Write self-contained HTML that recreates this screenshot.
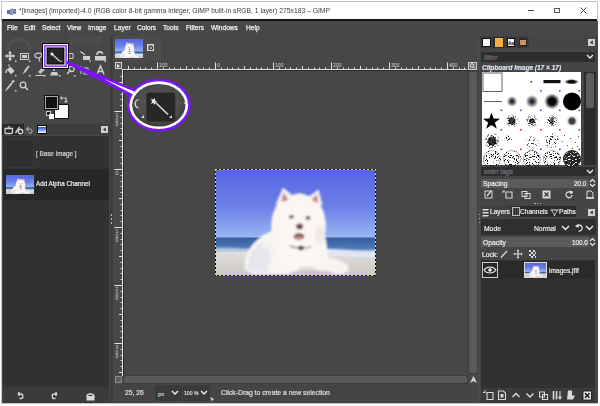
<!DOCTYPE html>
<html><head><meta charset="utf-8">
<style>
*{margin:0;padding:0;box-sizing:border-box}
html,body{width:600px;height:406px;overflow:hidden;background:#fff;font-family:"Liberation Sans",sans-serif}
.a{position:absolute}
.t{position:absolute;white-space:nowrap;line-height:1;transform-origin:0 0}
#menu .t{color:#f2f2f2;font-size:8px;top:24px;transform:scaleX(.83);-webkit-text-stroke:.25px #f2f2f2}
.ic{position:absolute;overflow:visible}
#right .t,#left .t,#imgwin .t{-webkit-text-stroke:.2px currentColor}
</style></head><body>
<svg width="0" height="0" style="position:absolute">
<defs>
<linearGradient id="sky" x1="0" y1="0" x2="0" y2="68.5" gradientUnits="userSpaceOnUse"><stop offset="0" stop-color="#5664e0"/><stop offset=".55" stop-color="#6c80e8"/><stop offset="1" stop-color="#9ab6f2"/></linearGradient>
<linearGradient id="sea" x1="0" y1="68.5" x2="0" y2="88" gradientUnits="userSpaceOnUse"><stop offset="0" stop-color="#3a5c98"/><stop offset=".4" stop-color="#4670b0"/><stop offset="1" stop-color="#6a94c8"/></linearGradient>
<linearGradient id="sand" x1="0" y1="84" x2="0" y2="107" gradientUnits="userSpaceOnUse"><stop offset="0" stop-color="#dedcdc"/><stop offset="1" stop-color="#cdc8c2"/></linearGradient>
<filter id="bl" x="-20%" y="-20%" width="140%" height="140%"><feGaussianBlur stdDeviation="1.2"/></filter>
<filter id="bl2" x="-20%" y="-20%" width="140%" height="140%"><feGaussianBlur stdDeviation=".9"/></filter>
<symbol id="dog" viewBox="0 0 160 107" preserveAspectRatio="none">
<rect width="160" height="107" fill="url(#sky)"/>
<rect y="68.5" width="160" height="20" fill="url(#sea)"/>
<g filter="url(#bl)">
<path d="M100 80C120 79 140 83 160 81V90H100Z" fill="#dfe6f2"/>
<path d="M0 79C15 78 30 80 45 80V85H0Z" fill="#b8cae0"/>
</g>
<path d="M0 83C30 82 60 84 100 86C130 88 150 88 160 89V107H0Z" fill="url(#sand)"/>
<g filter="url(#bl2)">
<!-- body shadow side -->
<path d="M30 101C27 88 36 70 56 62L108 62C112 72 111 82 113 88C124 90 134 96 133 102L126 105L38 105Z" fill="#f7f4f1"/>
<path d="M32 100C31 90 37 79 47 73C50 82 52 93 54 103L38 103Z" fill="#e6e6ee"/>

<!-- paws -->
<ellipse cx="64" cy="98" rx="12" ry="6.5" fill="#f8f5f2"/>
<ellipse cx="119" cy="98" rx="13.5" ry="6" fill="#f6f3f0"/>
<!-- chest -->
<ellipse cx="84" cy="84" rx="22" ry="17" fill="#faf7f4"/>
<!-- head -->
<path d="M56 60C55 45 61 33 70 28L84 24L97 28C105 33 111 45 110 60C109 72 98 80 84 80C70 80 57 72 56 60Z" fill="#faf6f2"/>
<path d="M60 36L67.6 18.5L79 28Z" fill="#f5f1ed"/>
<path d="M107 37L103 20.5L92 28.5Z" fill="#f5f1ed"/>
<path d="M66 33L68 23.5L73 31Z" fill="#c8808a"/>
<path d="M102 34L101.5 25L96 31Z" fill="#c8808a"/>
<ellipse cx="75.9" cy="47.7" rx="2.4" ry="1.8" fill="#5a4038"/>
<ellipse cx="92.4" cy="48.9" rx="2.4" ry="1.8" fill="#5a4038"/>
<ellipse cx="84.1" cy="57.5" rx="3.5" ry="2.9" fill="#6a4444"/>
<ellipse cx="83.5" cy="67.5" rx="5.2" ry="3.2" fill="#5a3030"/>
<ellipse cx="83.5" cy="68.3" rx="3.5" ry="1.8" fill="#d88a8a"/>
<path d="M74 76C80 78.5 90 79 96 77L95 78.5C90 80 80 80 75 78Z" fill="#6a6068" opacity=".8"/>
<ellipse cx="85.5" cy="79" rx="2.8" ry="2.2" fill="#3a3640"/>
<ellipse cx="92" cy="101" rx="10" ry="3.5" fill="#dcd8d4" opacity=".8"/>
<ellipse cx="104" cy="66" rx="5" ry="9" fill="#ebe6e2" opacity=".7"/>
<ellipse cx="52" cy="88" rx="4" ry="10" fill="#e4e4ec" opacity=".7"/>
<ellipse cx="96" cy="104" rx="22" ry="2.5" fill="#bdb8b4" opacity=".7"/>
</g>
</symbol>
</defs></svg>
<!-- window frame -->
<div class="a" style="left:1px;top:1px;width:597px;height:403px;background:#c4c4c4"></div>
<div class="a" style="left:2px;top:2px;width:595px;height:17px;background:#fff"></div>
<div class="a" style="left:2px;top:19px;width:595px;height:2px;background:#161616"></div>
<div class="a" style="left:2px;top:21px;width:596px;height:382px;background:#474747"></div>

<!-- TITLE -->
<svg class="ic" style="left:7px;top:8px" width="9" height="7" viewBox="0 0 9 7">
<rect x="0" y="2" width="3" height="4" fill="#5a6fd0"/><rect x="3" y="1" width="2" height="6" fill="#8a8fb0"/><rect x="5" y="0" width="1" height="7" fill="#9aa"/><rect x="6" y="1" width="3" height="5" fill="#6a80c8"/>
</svg>
<div class="t" style="left:19px;top:7px;font-size:8px;color:#3c3c3c;transform:scaleX(.845)">*[images] (imported)-4.0 (RGB color 8-bit gamma integer, GIMP built-in sRGB, 1 layer) 275x183 – GIMP</div>
<div class="a" style="left:528px;top:10px;width:6px;height:1px;background:#555"></div>
<div class="a" style="left:554px;top:8px;width:6px;height:5px;border:1px solid #555"></div>
<svg class="ic" style="left:580px;top:7px" width="7" height="7" viewBox="0 0 7 7"><path d="M0.5 0.5L6.5 6.5M6.5 0.5L0.5 6.5" stroke="#444" stroke-width="1"/></svg>

<!-- MENU -->
<div id="menu">
<div class="t" style="left:6.5px">File</div>
<div class="t" style="left:24px">Edit</div>
<div class="t" style="left:42px">Select</div>
<div class="t" style="left:67px">View</div>
<div class="t" style="left:88px">Image</div>
<div class="t" style="left:113.5px">Layer</div>
<div class="t" style="left:137px">Colors</div>
<div class="t" style="left:163px">Tools</div>
<div class="t" style="left:186px">Filters</div>
<div class="t" style="left:210.5px">Windows</div>
<div class="t" style="left:246px">Help</div>
</div>

<!-- LEFT DOCK -->
<div id="left">
<!-- wilber faint -->
<svg class="ic" style="left:2px;top:35px" width="108" height="15" viewBox="0 0 108 15">
<path d="M6 15 A10 10 0 0 1 28 15" stroke="#505050" stroke-width="3" fill="none"/>
<path d="M34 15 A8 8 0 0 1 50 15" stroke="#4d4d4d" stroke-width="2" fill="none"/>
<path d="M52 15 A8 8 0 0 1 66 12" stroke="#4d4d4d" stroke-width="2" fill="none"/>
<rect x="68" y="1" width="32" height="8" fill="#4d4d4d"/>
</svg>
<!-- toolbox icons -->
<svg class="ic" style="left:0;top:45px" width="110" height="50" viewBox="0 0 110 50" fill="#cfcfcf" stroke="#cfcfcf">
<!-- move -->
<path d="M10 6.5V15.5M5.5 11H14.5" stroke-width="1.6" fill="none"/>
<path d="M10 6L8 8.5H12ZM10 16L8 13.5H12ZM5 11L7.5 9V13ZM15 11L12.5 9V13Z" stroke="none"/>
<!-- rect select -->
<rect x="20.5" y="8.5" width="8" height="6" fill="none" stroke-width="1"/><rect x="22" y="10" width="5" height="3" stroke="none"/>
<!-- lasso -->
<path d="M39 13C34 13 33.5 9 37 8.3C41 7.6 44 9.5 40.5 12C39 13 38.5 14.5 40 16.5" fill="none" stroke-width="1.2"/>
<!-- crop -->
<path d="M69 8.5H73V13.5H69Z" fill="none" stroke-width="1"/>
<!-- transform -->
<path d="M80.5 6.5L85 10" stroke-width="1.3" fill="none"/><rect x="83" y="11" width="7" height="4" stroke="none"/>
<!-- unlock -->
<path d="M97 10C97 6 102 6 102.5 9" fill="none" stroke-width="1.6"/><rect x="95" y="11" width="11" height="4.5" stroke="none"/>
<!-- row 2 -->
<path d="M7 24.5L10.5 21.5L14.5 26L11 29.5Z" stroke="none"/><path d="M7 24.5L5.5 28" stroke-width="1.4" fill="none"/><path d="M9 21.5V19.5" stroke-width="1.2"/>
<path d="M29 21L25 26" stroke-width="2" fill="none"/><path d="M25.5 24.5L22 29.5L26.5 26.5Z" stroke="none"/>
<path d="M38 27L42.5 22L45 24.5L40.5 29Z" stroke="none" opacity=".9"/><rect x="35.5" y="30" width="9" height="1" stroke="none"/>
<path d="M54 21.5V26" stroke-width="1.4"/><path d="M50 30.5H58.5L57 27H51.5Z" stroke="none"/><circle cx="54" cy="21.5" r="1.3" stroke="none"/>
<path d="M67 29L71 25" stroke-width="1.4" fill="none"/><circle cx="71.5" cy="24" r="2.6" fill="none" stroke-width="1.3"/>
<path d="M81 21V29M84 23H88V29H84Z" stroke-width="1.1" fill="none"/>
<path d="M97 29.5L100.5 21L104 29.5M98.3 26.5H102.7" stroke-width="1.5" fill="none"/>
<!-- row 3 -->
<path d="M7 44L12 38" stroke-width="1.8" fill="none"/><path d="M12 37.5L14 35.5" stroke-width="2.2"/><path d="M7 44L5.5 46" stroke-width="1"/>
<circle cx="23" cy="40" r="2.8" fill="none" stroke-width="1.3"/><path d="M25 42L28 45" stroke-width="1.6"/>
<!-- corner marks -->
<g stroke="none"><rect x="15" y="15.5" width="1.5" height="1.5"/><rect x="29" y="15.5" width="1.5" height="1.5"/><rect x="44" y="15.5" width="1.5" height="1.5"/><rect x="89.5" y="15.5" width="1.5" height="1.5"/><rect x="104.5" y="15.5" width="1.5" height="1.5"/>
<rect x="15" y="30" width="1.5" height="1.5"/><rect x="29" y="30" width="1.5" height="1.5"/><rect x="44" y="30" width="1.5" height="1.5"/><rect x="59" y="30" width="1.5" height="1.5"/><rect x="74" y="30" width="1.5" height="1.5"/>
<rect x="15" y="45" width="1.5" height="1.5"/></g>
</svg>
<!-- fg/bg -->
<div class="a" style="left:54px;top:104px;width:15px;height:15px;background:#fff;border:1px solid #111"></div>
<div class="a" style="left:44px;top:95px;width:15px;height:15px;background:#111;border:1px solid #111;box-shadow:inset 0 0 0 1px #aaa,inset 0 0 0 2px #111"></div>
<svg class="ic" style="left:60px;top:96px" width="8" height="7" viewBox="0 0 8 7"><path d="M1 2H6V6" stroke="#ccc" stroke-width="1.2" fill="none"/><path d="M0 2L2 0V4ZM6 7L4 5H8Z" fill="#ccc"/></svg>
<div class="a" style="left:46px;top:111px;width:5px;height:5px;background:#111;border:1px solid #ccc"></div>
<div class="a" style="left:49px;top:114px;width:5px;height:5px;background:#fff"></div>

<!-- dock tabs -->
<div class="a" style="left:2px;top:123.5px;width:108px;height:11px;background:#3e3e3e"></div>
<div class="a" style="left:2px;top:123.5px;width:22px;height:11px;background:#2a2a2a"></div>
<div class="a" style="left:24px;top:123.5px;width:12px;height:11px;background:#474747"></div>
<svg class="ic" style="left:3px;top:124.5px" width="45" height="10" viewBox="0 0 45 10" stroke="#cfcfcf" fill="none">
<path d="M2 3.5H9.5V7.5C9.5 8.5 9 8.5 8 8.5H3.5C2.5 8.5 2 8.5 2 7.5Z" stroke-width="1.3"/><path d="M4.5 3.5L5.5 1.5H6.5L7 3.5" stroke-width="1"/>
<path d="M12.5 8L16.5 2" stroke-width="1.4"/><circle cx="17.5" cy="6.5" r="2.2" stroke-width="1.4"/>
<path d="M23.5 4H27.5C29.5 4 29.5 8 27.5 8H25.5M23.5 4L25.5 2M23.5 4L25.5 6" stroke-width="1.1" stroke="#aaa"/>
</svg>
<div class="a" style="left:37px;top:124.5px;width:9.5px;height:9.5px;background:#000"></div>
<div class="a" style="left:38px;top:125.5px;width:7.5px;height:7.5px;background:linear-gradient(#f4f4f4 0,#f4f4f4 1.5px,#3a60e0 1.5px,#9ab0f0 5px,#eee 6px)"></div>
<div class="a" style="left:101px;top:126px;width:7px;height:7px;background:#d0d0d0"></div>
<svg class="ic" style="left:101px;top:126px" width="7" height="7" viewBox="0 0 7 7"><path d="M4.8 1.5L2 3.5L4.8 5.5Z" fill="#333"/></svg>

<!-- undo list -->
<div class="a" style="left:3px;top:136px;width:106px;height:252px;background:#313131"></div>
<div class="a" style="left:6px;top:139px;width:28px;height:29px;background:#2e2e2e;border:1px solid #383838"></div>
<div class="t" style="left:36px;top:150px;font-size:7px;color:#d8d8d8;transform:scaleX(.9)">[ Base Image ]</div>
<div class="a" style="left:3px;top:169px;width:106px;height:31px;background:#272727"></div>
<svg id="thumb1" class="a" style="left:6px;top:175px" width="28" height="19"><use href="#dog" width="28" height="19"/></svg>
<div class="t" style="left:36px;top:180px;font-size:7px;color:#f0f0f0;transform:scaleX(.9)">Add Alpha Channel</div>

<!-- bottom buttons -->
<div class="a" style="left:3px;top:387px;width:106px;height:1px;background:#3a3a3a"></div>
<div class="a" style="left:3px;top:388px;width:106px;height:15px;background:#3b3b3b"></div>
<svg class="ic" style="left:0;top:389px" width="110" height="14" viewBox="0 0 110 14" stroke="#d8d8d8" fill="none">
<path d="M18 5H21C23.5 5 23.5 9.5 21 9.5H19.5M18 5L19.5 3.2M18 5L19.5 6.8" stroke-width="1.3"/>
<path d="M57 5H54C51.5 5 51.5 9.5 54 9.5H55.5M57 5L55.5 3.2M57 5L55.5 6.8" stroke-width="1.3"/>
<path d="M87 7.5C87 4 94 4 94 7.5" stroke-width="1.5"/><rect x="86.5" y="7" width="8" height="4.5" fill="#d8d8d8" stroke="none"/>
</svg>
</div>

<!-- separators -->
<div class="a" style="left:110px;top:36px;width:3px;height:367px;background:#3c3c3c"></div>
<div class="a" style="left:477px;top:36px;width:3px;height:367px;background:#4a4a4a"></div>

<!-- IMAGE WINDOW -->
<div id="imgwin">
<!-- image tabs -->
<div class="a" style="left:113px;top:36px;width:48px;height:25px;background:#4c4c4c"></div>
<svg id="thumb2" class="a" style="left:115px;top:38.5px" width="28" height="19.5"><use href="#dog" width="28" height="19.5"/></svg>
<div class="a" style="left:146.5px;top:43.5px;width:7.5px;height:7.5px;background:#9a9a9a;border:1px solid #d8d8d8"></div>
<svg class="ic" style="left:146.5px;top:43.5px" width="8" height="8" viewBox="0 0 8 8"><circle cx="4" cy="4" r="2.3" fill="#333"/><path d="M2.7 2.7L5.3 5.3M5.3 2.7L2.7 5.3" stroke="#ccc" stroke-width=".8"/></svg>
<!-- ruler corner -->
<div class="a" style="left:114.5px;top:62px;width:7.5px;height:7px;background:#5a5a5a;border:1px solid #cfcfcf"></div>
<svg class="ic" style="left:116px;top:63.5px" width="5" height="4" viewBox="0 0 5 4"><path d="M1 0L4 2L1 4Z" fill="#eee"/></svg>
<!-- rulers -->
<svg class="ic" style="left:113px;top:61px" width="355" height="315" viewBox="0 0 355 315">
<g stroke="#e0e0e0" stroke-width="1" fill="none">
<path d="M9 8.5H354"/>
<path d="M9.5 9V315"/>
</g>
<g id="rt" stroke="#e0e0e0" stroke-width="1"><path d="M15.5 5.0V8.5M21.5 6.5V8.5M27.5 6.5V8.5M32.5 6.5V8.5M38.5 6.5V8.5M44.5 1.5V8.5M50.5 6.5V8.5M56.5 6.5V8.5M61.5 6.5V8.5M67.5 6.5V8.5M73.5 5.0V8.5M79.5 6.5V8.5M85.5 6.5V8.5M90.5 6.5V8.5M96.5 6.5V8.5M102.5 1.5V8.5M108.5 6.5V8.5M114.5 6.5V8.5M119.5 6.5V8.5M125.5 6.5V8.5M131.5 5.0V8.5M137.5 6.5V8.5M143.5 6.5V8.5M148.5 6.5V8.5M154.5 6.5V8.5M160.5 1.5V8.5M166.5 6.5V8.5M172.5 6.5V8.5M177.5 6.5V8.5M183.5 6.5V8.5M189.5 5.0V8.5M195.5 6.5V8.5M201.5 6.5V8.5M206.5 6.5V8.5M212.5 6.5V8.5M218.5 1.5V8.5M224.5 6.5V8.5M230.5 6.5V8.5M235.5 6.5V8.5M241.5 6.5V8.5M247.5 5.0V8.5M253.5 6.5V8.5M259.5 6.5V8.5M264.5 6.5V8.5M270.5 6.5V8.5M276.5 1.5V8.5M282.5 6.5V8.5M288.5 6.5V8.5M293.5 6.5V8.5M299.5 6.5V8.5M305.5 5.0V8.5M311.5 6.5V8.5M317.5 6.5V8.5M322.5 6.5V8.5M328.5 6.5V8.5M334.5 1.5V8.5M340.5 6.5V8.5M346.5 6.5V8.5M351.5 6.5V8.5M7.5 15.5H9.5M6.0 21.5H9.5M7.5 27.5H9.5M7.5 33.5H9.5M7.5 38.5H9.5M7.5 44.5H9.5M1.5 50.5H9.5M7.5 56.5H9.5M7.5 62.5H9.5M7.5 67.5H9.5M7.5 73.5H9.5M6.0 79.5H9.5M7.5 85.5H9.5M7.5 91.5H9.5M7.5 96.5H9.5M7.5 102.5H9.5M1.5 108.5H9.5M7.5 114.5H9.5M7.5 120.5H9.5M7.5 125.5H9.5M7.5 131.5H9.5M6.0 137.5H9.5M7.5 143.5H9.5M7.5 149.5H9.5M7.5 154.5H9.5M7.5 160.5H9.5M1.5 166.5H9.5M7.5 172.5H9.5M7.5 178.5H9.5M7.5 183.5H9.5M7.5 189.5H9.5M6.0 195.5H9.5M7.5 201.5H9.5M7.5 207.5H9.5M7.5 212.5H9.5M7.5 218.5H9.5M1.5 224.5H9.5M7.5 230.5H9.5M7.5 236.5H9.5M7.5 241.5H9.5M7.5 247.5H9.5M6.0 253.5H9.5M7.5 259.5H9.5M7.5 265.5H9.5M7.5 270.5H9.5M7.5 276.5H9.5M1.5 282.5H9.5M7.5 288.5H9.5M7.5 294.5H9.5M7.5 299.5H9.5M7.5 305.5H9.5M6.0 311.5H9.5"/></g><g fill="#d8d8d8" font-size="5" font-family="Liberation Sans"><text x="46.0" y="5.5">100</text><text x="104.0" y="5.5">0</text><text x="162.0" y="5.5">100</text><text x="220.0" y="5.5">200</text><text x="278.0" y="5.5">300</text><text x="336.0" y="5.5">400</text><text x="2.5" y="56.0">1</text><text x="2.5" y="60.5">0</text><text x="2.5" y="65.0">0</text><text x="2.5" y="114.0">0</text><text x="2.5" y="172.0">1</text><text x="2.5" y="176.5">0</text><text x="2.5" y="181.0">0</text><text x="2.5" y="230.0">2</text><text x="2.5" y="234.5">0</text><text x="2.5" y="239.0">0</text><text x="2.5" y="288.0">3</text><text x="2.5" y="292.5">0</text><text x="2.5" y="297.0">0</text></g>
</svg>
<!-- canvas -->
<div class="a" style="left:123px;top:70px;width:345px;height:305px;background:#474747"></div>
<div class="a" style="left:123px;top:70px;width:345px;height:1px;background:#2a2a2a"></div>
<div class="a" style="left:123px;top:70px;width:1px;height:305px;background:#2a2a2a"></div>
<div class="a" style="left:110.7px;top:214px;width:1.5px;height:10px;background:repeating-linear-gradient(180deg,#bbb 0 1.5px,transparent 1.5px 4.2px)"></div>
<!-- zoom button -->
<div class="a" style="left:468px;top:62px;width:9px;height:8px;background:#6a6a6a;border:1px solid #cfcfcf"></div>
<svg class="ic" style="left:469px;top:63px" width="7" height="6" viewBox="0 0 7 6"><circle cx="3" cy="2.6" r="1.8" fill="none" stroke="#eee" stroke-width=".9"/><path d="M4.3 3.9L5.8 5.4" stroke="#eee" stroke-width="1"/></svg>
<!-- v scrollbar -->
<div class="a" style="left:468px;top:70px;width:10px;height:304px;background:#3c3c3c"></div>
<div class="a" style="left:469px;top:72px;width:8px;height:301px;background:#5a5a5a;border-radius:2px"></div>
<svg class="ic" style="left:469px;top:375px" width="9" height="9" viewBox="0 0 9 9"><path d="M4.5 1L8 8L4.5 6L1 8Z" fill="#d8d8d8"/></svg>
<!-- h scrollbar -->
<div class="a" style="left:123px;top:375px;width:345px;height:9px;background:#3c3c3c"></div>
<div class="a" style="left:124px;top:376px;width:343px;height:7px;background:#5a5a5a;border-radius:2px"></div>
<div class="a" style="left:115px;top:376px;width:6.5px;height:7px;background:#5e5e5e;border:1px solid #8a8a8a"></div>
<!-- status bar -->
<div class="a" style="left:113px;top:384px;width:364px;height:19px;background:#454545"></div>
<div class="t" style="left:125px;top:389px;font-size:8px;color:#e0e0e0;transform:scaleX(.85)">25, 26</div>
<div class="a" style="left:155px;top:385px;width:27px;height:16px;background:#3a3a3a;border-radius:2px"></div>
<div class="t" style="left:158px;top:391px;font-size:6px;color:#ccc">px</div>
<svg class="ic" style="left:171px;top:390px" width="8" height="5" viewBox="0 0 8 5"><path d="M1 1L4 4L7 1" stroke="#eee" stroke-width="1.4" fill="none"/></svg>
<div class="a" style="left:183px;top:385px;width:27px;height:16px;background:#3a3a3a;border-radius:2px"></div>
<div class="t" style="left:184px;top:390px;font-size:6px;color:#ddd;transform:scaleX(.85)">100 %</div>
<svg class="ic" style="left:200px;top:390px" width="8" height="5" viewBox="0 0 8 5"><path d="M1 1L4 4L7 1" stroke="#eee" stroke-width="1.4" fill="none"/></svg>
<svg class="ic" style="left:210px;top:397px" width="5" height="5" viewBox="0 0 5 5"><path d="M0 0L4 2L2 4Z" fill="#ddd"/></svg>
<div class="t" style="left:221px;top:389px;font-size:8px;color:#e0e0e0;transform:scaleX(.85)">Click-Drag to create a new selection</div>

<!-- photo -->
<svg id="photo" class="a" style="left:215px;top:169px" width="161" height="107"><use href="#dog" width="161" height="107"/></svg>
<div class="a" style="left:215px;top:169px;width:161px;height:1px;background:repeating-linear-gradient(90deg,#e6e21a 0 2.5px,#141414 2.5px 4px)"></div>
<div class="a" style="left:215px;top:275px;width:161px;height:1px;background:repeating-linear-gradient(90deg,#e6e21a 0 2.5px,#141414 2.5px 4px)"></div>
<div class="a" style="left:215px;top:169px;width:1px;height:107px;background:repeating-linear-gradient(180deg,#e6e21a 0 2.5px,#141414 2.5px 4px)"></div>
<div class="a" style="left:375px;top:169px;width:1px;height:107px;background:repeating-linear-gradient(180deg,#e6e21a 0 2.5px,#141414 2.5px 4px)"></div>
</div>

<!-- RIGHT DOCK -->
<div id="right">
<div class="a" style="left:480px;top:36px;width:118px;height:367px;background:#454545"></div>
<!-- brush tabs -->
<div class="a" style="left:480px;top:36px;width:49px;height:12px;background:#3c3c3c"></div>
<div class="a" style="left:493px;top:37px;width:11px;height:11px;background:#2a2a2a"></div>
<div class="a" style="left:482px;top:38px;width:8.5px;height:9px;background:#fafafa;border:1px solid #111"></div>
<div class="a" style="left:494.5px;top:38px;width:8.5px;height:9px;background:#f5b040"></div>
<div class="a" style="left:506.5px;top:38px;width:8.5px;height:9px;background:#fafafa;border:1px solid #111"></div>
<div class="t" style="left:508px;top:40.5px;font-size:5px;color:#333">Aa</div>
<div class="a" style="left:518.5px;top:38px;width:8px;height:9px;background:#2a2a2a"></div>
<div class="a" style="left:519.5px;top:40px;width:6px;height:5px;background:#c89860"></div>
<div class="a" style="left:588px;top:39px;width:7px;height:7px;background:#d0d0d0"></div>
<svg class="ic" style="left:588px;top:39px" width="7" height="7" viewBox="0 0 7 7"><path d="M4.8 1.5L2 3.5L4.8 5.5Z" fill="#333"/></svg>
<!-- filter -->
<div class="a" style="left:481px;top:51.5px;width:114px;height:10.5px;background:#2e2e2e"></div>
<div class="t" style="left:484px;top:53.5px;font-size:7px;color:#6e6e6e;font-style:italic">filter</div>
<svg class="ic" style="left:586px;top:54px" width="8" height="5" viewBox="0 0 8 5"><path d="M1 1L4 4L7 1" stroke="#eee" stroke-width="1.4" fill="none"/></svg>
<div class="t" style="left:482px;top:63.5px;font-size:7px;color:#dde4f0;font-style:italic;font-weight:bold;transform:scaleX(.93)">Clipboard Image (17 × 17)</div>
<!-- brush grid -->
<div class="a" style="left:481.5px;top:72px;width:99px;height:93px;background:#fff"></div>
<svg class="ic" style="left:481.5px;top:72px" width="99" height="93" viewBox="0 0 99 93">
<defs>
<radialGradient id="sb"><stop offset="0" stop-color="#000"/><stop offset=".45" stop-color="#000" stop-opacity=".95"/><stop offset="1" stop-color="#000" stop-opacity="0"/></radialGradient>
<radialGradient id="sb2"><stop offset="0" stop-color="#000" stop-opacity=".9"/><stop offset=".3" stop-color="#000" stop-opacity=".75"/><stop offset="1" stop-color="#000" stop-opacity="0"/></radialGradient>
<radialGradient id="sg"><stop offset="0" stop-color="#000" stop-opacity="1"/><stop offset=".6" stop-color="#000" stop-opacity=".8"/><stop offset="1" stop-color="#000" stop-opacity="0"/></radialGradient>
<filter id="spk" x="0" y="0" width="100%" height="100%"><feTurbulence type="fractalNoise" baseFrequency=".8" numOctaves="2" seed="7" result="n"/><feColorMatrix in="n" values="0 0 0 0 0  0 0 0 0 0  0 0 0 0 0  9 0 0 0 -4.6" result="m"/><feComposite in="SourceGraphic" in2="m" operator="in"/></filter>
<filter id="spk2" x="0" y="0" width="100%" height="100%"><feTurbulence type="fractalNoise" baseFrequency=".7" numOctaves="2" seed="2" result="n"/><feColorMatrix in="n" values="0 0 0 0 0  0 0 0 0 0  0 0 0 0 0  12 0 0 0 -7" result="m"/><feComposite in="SourceGraphic" in2="m" operator="in"/></filter>
<filter id="spk3" x="0" y="0" width="100%" height="100%"><feTurbulence type="fractalNoise" baseFrequency=".9" numOctaves="2" seed="11" result="n"/><feColorMatrix in="n" values="0 0 0 0 0  0 0 0 0 0  0 0 0 0 0  10 0 0 0 -5.75" result="m"/><feComposite in="SourceGraphic" in2="m" operator="in"/></filter>
<filter id="blr"><feGaussianBlur stdDeviation=".6"/></filter>
</defs>
<rect x="1" y="1" width="19" height="18.5" fill="#fff" stroke="#666" stroke-width="1"/>
<rect x="48.5" y="9" width="1.5" height="1.5" fill="#333"/>
<rect x="61.5" y="8" width="17" height="3.2" fill="#111"/>
<ellipse cx="89.5" cy="9.8" rx="7.5" ry="2.8" fill="url(#sb)"/>
<path d="M2 29.5H20" stroke="#666" stroke-width="1"/>
<circle cx="30" cy="29.4" r="5.5" fill="url(#sb2)"/>
<circle cx="50" cy="29.4" r="6.5" fill="url(#sb2)"/>
<circle cx="70" cy="29.4" r="8" fill="url(#sb)"/>
<circle cx="90" cy="29.4" r="9" fill="#000" filter="url(#blr)"/>
<path d="M9.5 40.5L11.6 46.6L18 46.7L12.9 50.6L14.8 56.7L9.5 53L4.2 56.7L6.1 50.6L1 46.7L7.4 46.6Z" fill="#000"/>
<g filter="url(#blr)" opacity=".8"><circle cx="30" cy="49" r="3.5" fill="#111"/><ellipse cx="50" cy="49" rx="3" ry="2.5" fill="#222"/><ellipse cx="70" cy="49" rx="1.8" ry="4" fill="#333"/><circle cx="90" cy="49" r="3.5" fill="#555"/><circle cx="10" cy="69" r="4.5" fill="#111"/></g>
<g filter="url(#spk)">
<circle cx="30" cy="49" r="7" fill="url(#sg)"/>
<circle cx="50" cy="49" r="7" fill="url(#sg)"/>
<circle cx="70" cy="49" r="6.5" fill="url(#sg)"/>
<circle cx="10" cy="69" r="9" fill="url(#sg)"/>
</g>
<circle cx="90" cy="49" r="6" fill="url(#sb2)" opacity=".6"/>
<g filter="url(#spk2)">
<circle cx="27" cy="66" r="3" fill="#000"/>
<circle cx="50" cy="71" r="8" fill="url(#sg)" opacity=".8"/>
<circle cx="70" cy="69" r="9" fill="url(#sg)"/>
</g>
<g fill="#222"><rect x="82" y="63" width=".9" height=".9"/><rect x="88" y="66" width=".9" height=".9"/><rect x="93" y="70" width=".9" height=".9"/><rect x="85" y="73" width=".9" height=".9"/><rect x="96" y="64" width=".9" height=".9"/><rect x="90" y="76" width=".9" height=".9"/><rect x="80" y="69" width=".9" height=".9"/><rect x="95" y="74" width=".9" height=".9"/></g>
<g filter="url(#spk3)">
<circle cx="10" cy="87" r="9" fill="#000"/><circle cx="30" cy="87" r="9" fill="#000"/><circle cx="50" cy="87" r="9" fill="#000"/><circle cx="70" cy="87" r="9" fill="#000"/>
</g>
<circle cx="90" cy="87" r="9" fill="#222"/>
<g fill="none" stroke="#333" stroke-width=".6" opacity=".6"><circle cx="10" cy="87" r="8.5"/><circle cx="30" cy="87" r="8.5"/><circle cx="50" cy="87" r="8.5"/><circle cx="70" cy="87" r="8.5"/></g>
<g filter="url(#spk2)"><circle cx="90" cy="87" r="8" fill="#fff"/></g>
<g fill="#3f4fd0"><rect x="58" y="18" width="1.6" height="1.6"/><rect x="77" y="18" width="1.6" height="1.6"/><rect x="96.5" y="18" width="1.6" height="1.6"/>
<rect x="18.5" y="37.5" width="1.6" height="1.6"/><rect x="38" y="37.5" width="1.6" height="1.6"/><rect x="58" y="37.5" width="1.6" height="1.6"/><rect x="77" y="37.5" width="1.6" height="1.6"/><rect x="96.5" y="37.5" width="1.6" height="1.6"/>
<rect x="18.5" y="57" width="1.6" height="1.6"/><rect x="58" y="76.5" width="1.6" height="1.6"/><rect x="77" y="76.5" width="1.6" height="1.6"/></g>
<g fill="#c03030"><rect x="38" y="57" width="1.6" height="1.6"/><rect x="58" y="57" width="1.6" height="1.6"/><rect x="77" y="57" width="1.6" height="1.6"/><rect x="96.5" y="57" width="1.6" height="1.6"/>
<rect x="18.5" y="76.5" width="1.6" height="1.6"/><rect x="38" y="76.5" width="1.6" height="1.6"/><rect x="96.5" y="76.5" width="1.6" height="1.6"/></g>
</svg>
<!-- brush scrollbar -->
<div class="a" style="left:584px;top:72px;width:11.5px;height:93px;background:#2c2c2c"></div>
<div class="a" style="left:585.5px;top:73px;width:8.5px;height:34.5px;background:#5c5c5c;border-radius:2px"></div>
<!-- enter tags -->
<div class="a" style="left:481px;top:167px;width:114px;height:9px;background:#2e2e2e"></div>
<div class="t" style="left:484px;top:168.5px;font-size:6.5px;color:#777;font-style:italic">enter tags</div>
<svg class="ic" style="left:586px;top:169px" width="8" height="5" viewBox="0 0 8 5"><path d="M1 1L4 4L7 1" stroke="#eee" stroke-width="1.4" fill="none"/></svg>
<!-- spacing -->
<div class="a" style="left:481px;top:178.5px;width:108px;height:9px;background:#5a5a5a"></div>
<div class="t" style="left:483px;top:179.5px;font-size:7.5px;color:#eee;transform:scaleX(.9)">Spacing</div>
<div class="t" style="left:574px;top:179.5px;font-size:7px;color:#eee;transform:scaleX(.9)">20.0</div>
<svg class="ic" style="left:589px;top:178px" width="7" height="10" viewBox="0 0 7 10"><path d="M1 4L3.5 1.5L6 4M1 6L3.5 8.5L6 6" stroke="#eee" stroke-width="1.1" fill="none"/></svg>
<!-- brush action icons -->
<svg class="ic" style="left:480px;top:189px" width="118" height="11" viewBox="0 0 118 11" stroke="#d8d8d8" fill="none">
<rect x="5" y="2" width="7" height="7" stroke-width="1"/><path d="M7 7L11 2" stroke-width="1.3"/>
<path d="M24 1V3H22M26 3V9H32V3Z" stroke-width="1.1"/>
<rect x="42" y="2.5" width="5" height="5" stroke-width="1"/><rect x="45" y="4.5" width="5" height="5" stroke-width="1"/>
<rect x="63" y="2" width="7" height="7" fill="#d8d8d8"/><path d="M64.5 3.5L68.5 7.5M68.5 3.5L64.5 7.5" stroke="#333" stroke-width="1.2"/>
<path d="M91 3.5A3 3 0 1 0 92 6" stroke-width="1.3"/><path d="M90 2L93 3L91 5Z" fill="#d8d8d8"/>
<path d="M107 2H111L113 4V9H107Z" stroke-width="1"/><path d="M106 9H114" stroke-width="1.5"/>
</svg>
<!-- dots separator -->
<div class="a" style="left:534px;top:202.5px;width:8px;height:1.5px;background:repeating-linear-gradient(90deg,#bbb 0 1.5px,transparent 1.5px 3px)"></div>
<div class="a" style="left:478.5px;top:214px;width:1.5px;height:10px;background:repeating-linear-gradient(180deg,#aaa 0 1.5px,transparent 1.5px 4px)"></div>
<!-- layers tabs -->
<div class="a" style="left:480px;top:206px;width:118px;height:11px;background:#454545"></div>
<div class="a" style="left:481px;top:206px;width:30px;height:11px;background:#3e3e3e"></div>
<div class="a" style="left:511px;top:206px;width:65px;height:11px;background:#2c2c2c"></div>
<svg class="ic" style="left:482px;top:207px" width="8" height="10" viewBox="0 0 8 10" fill="#ddd"><path d="M1 2H7L6 3.5H0ZM1 5H7L6 6.5H0ZM1 8H7L6 9.5H0Z"/></svg>
<div class="t" style="left:490px;top:208px;font-size:7.5px;color:#eee;transform:scaleX(.88)">Layers</div>
<div class="a" style="left:512px;top:207px;width:8px;height:9px;border:1px solid #bbb;background:repeating-linear-gradient(90deg,#555 0 1px,#2c2c2c 1px 2px)"></div>
<div class="t" style="left:520px;top:208px;font-size:7.5px;color:#eee;transform:scaleX(.88)">Channels</div>
<svg class="ic" style="left:550px;top:207px" width="9" height="10" viewBox="0 0 9 10" stroke="#ddd" fill="none"><path d="M0.5 3H8.5M2 3C2 6 4 5 4.5 9M7 3C7 6 5 5 4.5 9" stroke-width="1"/></svg>
<div class="t" style="left:559px;top:208px;font-size:7.5px;color:#eee;transform:scaleX(.88)">Paths</div>
<div class="a" style="left:587.5px;top:208.5px;width:7px;height:7px;background:#d0d0d0"></div>
<svg class="ic" style="left:587.5px;top:208.5px" width="7" height="7" viewBox="0 0 7 7"><path d="M4.8 1.5L2 3.5L4.8 5.5Z" fill="#333"/></svg>
<!-- mode row -->
<div class="a" style="left:481px;top:219px;width:115px;height:16px;background:#2f2f2f"></div>
<div class="t" style="left:484px;top:225px;font-size:7.5px;color:#eee;transform:scaleX(.9)">Mode</div>
<div class="t" style="left:534px;top:225px;font-size:7.5px;color:#eee;transform:scaleX(.9)">Normal</div>
<svg class="ic" style="left:561px;top:225px" width="9" height="6" viewBox="0 0 9 6"><path d="M1 1L4.5 4.5L8 1" stroke="#eee" stroke-width="1.4" fill="none"/></svg>
<svg class="ic" style="left:574px;top:223px" width="9" height="10" viewBox="0 0 9 10"><path d="M3 3A3 3 0 1 1 4.5 8" stroke="#eee" stroke-width="1.2" fill="none"/><path d="M1 3L4.5 1V5Z" fill="#eee"/></svg>
<svg class="ic" style="left:585px;top:225px" width="9" height="6" viewBox="0 0 9 6"><path d="M1 1L4.5 4.5L8 1" stroke="#eee" stroke-width="1.4" fill="none"/></svg>
<!-- opacity -->
<div class="a" style="left:481px;top:237px;width:108px;height:9.5px;background:#5a5a5a"></div>
<div class="t" style="left:483px;top:238.5px;font-size:7.5px;color:#eee;transform:scaleX(.9)">Opacity</div>
<div class="t" style="left:572px;top:238.5px;font-size:7px;color:#eee;transform:scaleX(.9)">100.0</div>
<svg class="ic" style="left:589px;top:237px" width="7" height="10" viewBox="0 0 7 10"><path d="M1 4L3.5 1.5L6 4M1 6L3.5 8.5L6 6" stroke="#eee" stroke-width="1.1" fill="none"/></svg>
<!-- lock -->
<div class="t" style="left:482px;top:250.5px;font-size:7.5px;color:#eee;transform:scaleX(.9)">Lock:</div>
<svg class="ic" style="left:500px;top:249px" width="40" height="10" viewBox="0 0 40 10" stroke="#ddd" fill="none">
<path d="M1 8.5L7 2" stroke-width="1.3"/>
<path d="M18 1V9M14 5H22" stroke-width="1.2"/><path d="M18 0.5L16.5 2H19.5ZM18 9.5L16.5 8H19.5ZM13.5 5L15 3.5V6.5ZM22.5 5L21 3.5V6.5Z" fill="#ddd" stroke="none"/>
<g fill="#ddd" stroke="none"><rect x="29" y="1" width="2" height="2"/><rect x="33" y="1" width="2" height="2"/><rect x="31" y="3" width="2" height="2"/><rect x="29" y="5" width="2" height="2"/><rect x="33" y="5" width="2" height="2"/><rect x="31" y="7" width="2" height="2"/><rect x="35" y="3" width="1" height="2"/><rect x="35" y="7" width="1" height="2"/></g>
</svg>
<!-- layers list -->
<div class="a" style="left:481px;top:260px;width:114px;height:128px;background:#313131"></div>
<div class="a" style="left:481px;top:261px;width:114px;height:18px;background:#2a2a2a"></div>
<div class="a" style="left:482px;top:262px;width:16px;height:16px;border:1px solid #ccc;background:#262626"></div>
<svg class="ic" style="left:483px;top:266px" width="14" height="8" viewBox="0 0 14 8"><path d="M1 4C4 0 10 0 13 4C10 8 4 8 1 4Z" fill="none" stroke="#eee" stroke-width="1.1"/><circle cx="7" cy="4" r="1.8" fill="#eee"/></svg>
<div class="a" style="left:524px;top:262px;width:23px;height:16px;border:1px solid #ddd;background:#fff"></div>
<svg class="a" style="left:525px;top:263px" width="21" height="14"><use href="#dog" width="21" height="14"/></svg>
<div class="t" style="left:549px;top:266.5px;font-size:7.5px;color:#eee;transform:scaleX(.88)">images.jfif</div>
<!-- layer buttons -->
<div class="a" style="left:481px;top:388px;width:114px;height:15px;background:#3b3b3b"></div>
<svg class="ic" style="left:480px;top:389px" width="118" height="12" viewBox="0 0 118 12" stroke="#d8d8d8" fill="none">
<path d="M5 1.5V3.5H3M7 3.5V10.5H13V3.5Z" stroke-width="1.1"/>
<path d="M18.5 2H23.5L25.5 4V10.5H18.5Z" stroke-width="1.1"/><rect x="20.5" y="5" width="3" height="3.5" fill="#d8d8d8" stroke="none"/>
<path d="M32.5 8L36 4.5L39.5 8" stroke-width="1.5"/>
<path d="M46.5 4.5L50 8L53.5 4.5" stroke-width="1.5"/>
<rect x="59.5" y="3" width="5" height="5" stroke-width="1"/><rect x="62.5" y="5.5" width="5" height="5" stroke-width="1"/>
<path d="M73.5 2V10.5M76.5 2V10.5" stroke-width="1.6"/><path d="M80 2V9.5M78.3 7.5L80 10L81.7 7.5" stroke-width="1.1"/>
<path d="M88 1.5H92V6.5H95L93 10.5H87Z" fill="#d8d8d8" stroke="none"/>
<rect x="103" y="2" width="8.5" height="9" fill="#e0e0e0" stroke="#111" stroke-width=".8"/><path d="M105 4.3L109.5 8.8M109.5 4.3L105 8.8" stroke="#111" stroke-width="1.4"/>
</svg>
</div>

<!-- CALLOUT -->
<div id="callout">
<!-- tool highlight box -->
<div class="a" style="left:41.5px;top:43px;width:27.2px;height:25.5px;background:#262626;box-shadow:inset 0 0 0 1px #000,inset 0 0 0 2px #f6f6f6,inset 0 0 0 3.6px #8d3ef4,inset 0 0 0 4.6px #f0eaff,inset 0 0 0 5.6px #050505"></div>
<svg class="ic" style="left:47.5px;top:49px" width="15" height="14" viewBox="0 0 15 14"><path d="M4 5L11.5 12" stroke="#ddd" stroke-width="1.2"/><circle cx="4" cy="5" r="1.6" fill="#eee"/><path d="M11.5 13L13.5 11V13Z" fill="#ddd"/></svg>
<!-- tail + circle -->
<svg class="ic" style="left:0;top:0" width="200" height="140" viewBox="0 0 200 140">
<defs><radialGradient id="cin" cx=".5" cy=".45" r=".55"><stop offset="0" stop-color="#585858"/><stop offset=".75" stop-color="#4c4c4c"/><stop offset="1" stop-color="#3a3a3a"/></radialGradient></defs>
<g fill="#7c14fa"><ellipse cx="158.8" cy="105.2" rx="31.9" ry="26.4"/><path d="M67 60.7L142 92.2V102L67 63.9Z"/></g>
<g fill="#fdfdfd"><ellipse cx="158.8" cy="105.2" rx="29.3" ry="23.9"/><path d="M104 79L142 94.8V99.2Z"/></g>
<ellipse cx="158.8" cy="105.2" rx="26.6" ry="21.3" fill="url(#cin)"/>
<path d="M138.5 99.5A5 4.5 0 0 0 138.5 108" stroke="#ddd" stroke-width="1.3" fill="none"/>
<rect x="146.4" y="92.4" width="28.8" height="29" rx="3" fill="#272727"/>
<path d="M151 98.5L153 99.5L155 98L155 100.5L157 101.5L155 102.5L155 105L153.2 103L151 104L152 101.5Z" fill="#e8e8e8"/>
<path d="M155.5 102.5L168 114.5" stroke="#ddd" stroke-width="1.6"/>
<path d="M169 118L172 115V118Z" fill="#ddd"/>
<path d="M141 118L144 115V118Z" fill="#ddd"/>
<path d="M184 102L185 104" stroke="#ccc" stroke-width="1"/>
</svg>
</div>
</body></html>
